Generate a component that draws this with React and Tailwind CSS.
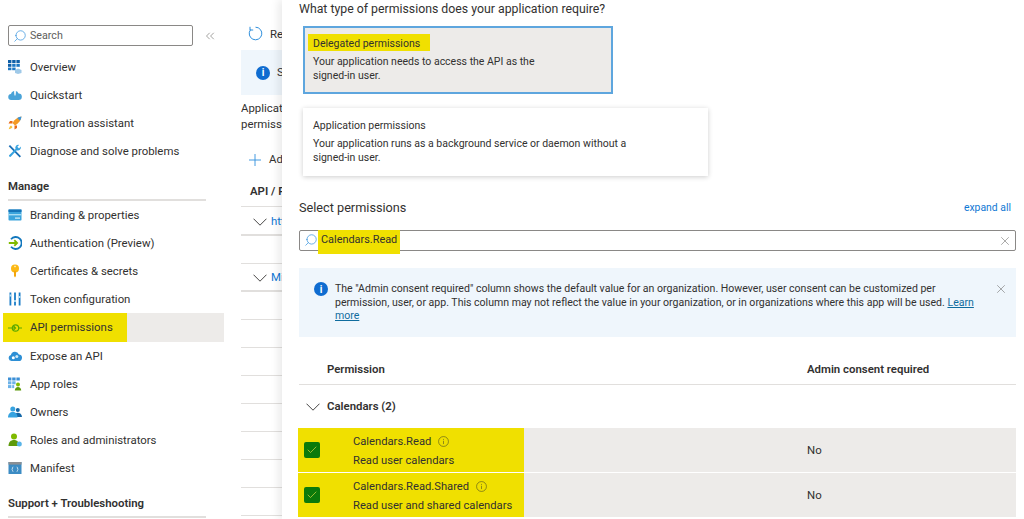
import { Search, ChevronsLeft, X, Check } from 'lucide-react';

const ICONS = {
  overview: (
    <svg viewBox="0 0 14 14" className="w-[14px] h-[14px]">
      <rect x="0" y="0" width="3.4" height="3" fill="#0f5fa8" /><rect x="4.2" y="0" width="3.4" height="3" fill="#0f5fa8" /><rect x="8.4" y="0" width="3.4" height="3" fill="#0f5fa8" />
      <rect x="0" y="3.8" width="3.4" height="3" fill="#0f5fa8" /><rect x="4.2" y="3.8" width="3.4" height="3" fill="#1d77c4" /><rect x="8.4" y="3.8" width="3.4" height="3" fill="#1d77c4" />
      <rect x="0" y="7.6" width="3.4" height="2.6" fill="#1d77c4" /><rect x="4.2" y="7.6" width="3.4" height="2.6" fill="#1d77c4" />
      <path d="M7 10l3-1.6 3.5 1.6v3l-3.500 1-3-1z" fill="#9fc9e8" />
    </svg>
  ),
  quickstart: (
    <svg viewBox="0 0 14 14" className="w-[14px] h-[14px]">
      <path d="M3.500 12a3 3 0 0 1-.5-6 4 4 0 0 1 7.600-.6A3.300 3.300 0 0 1 10.500 12z" fill="#4aa3d8" />
      <path d="M6 3.500l1-2 1 2-.5 4h-1z" fill="#fff" />
    </svg>
  ),
  rocket: (
    <svg viewBox="0 0 14 14" className="w-[14px] h-[14px]">
      <path d="M13.500.5C9.500 1 6.500 3.500 4.500 7l2.500 2.500c3.500-2 6-5 6.500-9z" fill="#f59a23" />
      <path d="M13.500.5c-1.500.2-3 .7-4.300 1.500l2.800 2.800c.8-1.300 1.300-2.800 1.500-4.300z" fill="#3a96dd" />
      <path d="M4.500 5H2L.5 7.500h4zM9 9.500V12l-2.500 1.500v-4z" fill="#e86a17" />
      <path d="M3 9.500c-1.500.8-2 2.500-2.200 3.700 1.300-.2 3-.7 3.700-2.200z" fill="#f8c13a" />
    </svg>
  ),
  tools: (
    <svg viewBox="0 0 14 14" className="w-[14px] h-[14px]">
      <path d="M2 1l11 11.200-1.300 1.300L.7 2.300z" fill="#1a6fb5" />
      <path d="M12.800 2.600a3 3 0 0 1-4 3.600L2.700 12.800a1.200 1.200 0 0 1-1.600-1.600L7.500 4.900a3 3 0 0 1 3.600-4L9.300 2.700l1.700 1.700z" fill="#37a3e0" />
    </svg>
  ),
  branding: (
    <svg viewBox="0 0 14 14" className="w-[14px] h-[14px]">
      <rect x="0.500" y="1.500" width="13" height="11" rx="0.800" fill="#3ba4dc" />
      <rect x="0.500" y="1.500" width="13" height="2.500" fill="#1674b8" />
      <rect x="0.500" y="6" width="13" height="1.400" fill="#a9ddf3" />
      <rect x="7" y="9.500" width="5" height="1.200" fill="#d8f0fa" />
    </svg>
  ),
  auth: (
    <svg viewBox="0 0 14 14" className="w-[14px] h-[14px]" fill="none">
      <path d="M3 3.200A6 6 0 1 1 3 10.800" stroke="#1277bd" strokeWidth="1.800" />
      <path d="M.8 7h8M6.300 4.200L9.100 7l-2.800 2.800" stroke="#7fba00" strokeWidth="1.800" />
    </svg>
  ),
  key: (
    <svg viewBox="0 0 14 14" className="w-[14px] h-[14px]">
      <circle cx="7" cy="4.500" r="4" fill="#fcb814" />
      <path d="M6 7h2v5l-1 1.500L6 12z" fill="#f2a60e" />
      <rect x="6.200" y="1.800" width="1.600" height="1.400" fill="#fff3c4" />
    </svg>
  ),
  token: (
    <svg viewBox="0 0 14 14" className="w-[14px] h-[14px]">
      <rect x="1.500" y="0.500" width="1.800" height="13" fill="#1a7cc7" />
      <rect x="6.100" y="0.500" width="1.800" height="13" fill="#1a7cc7" />
      <rect x="10.700" y="0.500" width="1.800" height="13" fill="#1a7cc7" />
      <rect x="1.500" y="2.500" width="1.800" height="2" fill="#b3e0f7" />
      <rect x="6.100" y="8" width="1.800" height="2" fill="#b3e0f7" />
      <rect x="10.700" y="4" width="1.800" height="2" fill="#b3e0f7" />
    </svg>
  ),
  api: (
    <svg viewBox="0 0 14 14" className="w-[14px] h-[14px]" fill="none" stroke="#5aa700" strokeWidth="1.200">
      <circle cx="7.500" cy="7" r="3.200" />
      <path d="M0 7h6.500M11 7h3M5.500 5l2 2-2 2" />
    </svg>
  ),
  expose: (
    <svg viewBox="0 0 14 14" className="w-[14px] h-[14px]">
      <path d="M3.500 12a3 3 0 0 1-.6-5.900 4.200 4.200 0 0 1 8-.7A3.300 3.300 0 0 1 10.500 12z" fill="#2d8fd5" />
      <circle cx="5.300" cy="8.800" r="1.500" fill="#fff" /><circle cx="8.800" cy="7.500" r="1.500" fill="#cfe9f8" />
    </svg>
  ),
  roles: (
    <svg viewBox="0 0 14 14" className="w-[14px] h-[14px]">
      <rect x="0" y="0.500" width="3.400" height="3" fill="#3b8fd6" /><rect x="4.200" y="0.500" width="3.400" height="3" fill="#3b8fd6" /><rect x="8.400" y="0.500" width="3.400" height="3" fill="#3b8fd6" />
      <rect x="0" y="4.300" width="3.400" height="3" fill="#6cb2e8" /><rect x="4.200" y="4.300" width="3.400" height="3" fill="#6cb2e8" />
      <rect x="0" y="8.100" width="3.400" height="3" fill="#6cb2e8" /><rect x="4.200" y="8.100" width="2" height="3" fill="#6cb2e8" />
      <circle cx="10" cy="7.500" r="2" fill="#7fba00" />
      <path d="M6.800 13.500c0-2.300 1.400-3.500 3.200-3.500s3.200 1.200 3.200 3.500z" fill="#5e9a0c" />
    </svg>
  ),
  owners: (
    <svg viewBox="0 0 14 14" className="w-[14px] h-[14px]">
      <circle cx="9.800" cy="5" r="2" fill="#1467a8" />
      <path d="M6.500 12c0-2.800 1.400-4.300 3.300-4.300S14 9.200 14 12z" fill="#1467a8" />
      <circle cx="4.800" cy="4" r="2.500" fill="#37a3e0" />
      <path d="M0 12.500c0-3.500 2-5.500 4.800-5.500s4.700 2 4.700 5.500z" fill="#37a3e0" />
    </svg>
  ),
  admins: (
    <svg viewBox="0 0 14 14" className="w-[14px] h-[14px]">
      <circle cx="6" cy="3.500" r="3" fill="#7fba00" />
      <path d="M.5 13c0-4 2.300-6 5.500-6s5 2 5 6z" fill="#5e9a0c" />
      <circle cx="11.300" cy="11" r="2.500" fill="#59b4e8" />
    </svg>
  ),
  manifest: (
    <svg viewBox="0 0 14 14" className="w-[14px] h-[14px]">
      <rect x="0.500" y="1" width="13" height="12" fill="#3c8cc4" />
      <rect x="0.500" y="1" width="13" height="2.600" fill="#8a8f94" />
      <path d="M5.300 6c-.8 0-.8.500-.8 1.200s-.4 1-.7 1.100c.3.100.7.400.7 1.100s0 1.100.8 1.100M8.700 6c.8 0 .8.500.8 1.200s.4 1 .7 1.100c-.3.100-.7.400-.7 1.100s0 1.100-.8 1.100" fill="none" stroke="#fff" strokeWidth="0.700" />
    </svg>
  ),
};

const TOP_ITEMS = [
  ['overview', 'Overview'],
  ['quickstart', 'Quickstart'],
  ['rocket', 'Integration assistant'],
  ['tools', 'Diagnose and solve problems'],
];

const MANAGE_BEFORE = [
  ['branding', 'Branding & properties'],
  ['auth', 'Authentication (Preview)'],
  ['key', 'Certificates & secrets'],
  ['token', 'Token configuration'],
];

const MANAGE_AFTER = [
  ['expose', 'Expose an API'],
  ['roles', 'App roles'],
  ['owners', 'Owners'],
  ['admins', 'Roles and administrators'],
  ['manifest', 'Manifest'],
];

function Chevron() {
  return (
    <svg viewBox="0 0 14 8" className="w-[14px] h-[8px] shrink-0" fill="none" stroke="#323130" strokeWidth="0.900">
      <path d="M.5.7L7 7.200 13.500.7" />
    </svg>
  );
}

function SearchIcon() {
  return <Search size={14} strokeWidth={1.2} className="text-[#2f8fdc] -scale-x-100 shrink-0" />;
}

function InfoDot() {
  return (
    <div className="w-[14px] h-[14px] rounded-full bg-[#0f6cd0] text-white flex items-center justify-center shrink-0 text-[10px] font-bold">i</div>
  );
}

function InfoOutline() {
  return (
    <svg viewBox="0 0 12 12" className="w-[11px] h-[11px] shrink-0" fill="none" stroke="#5b5a20" strokeWidth="0.700">
      <circle cx="6" cy="6" r="5.400" />
      <path d="M6 5.200v3.600M6 3.200v1" />
    </svg>
  );
}

function NavRow({ icon, label }) {
  return (
    <div className="h-[28px] pl-[8px] flex items-center gap-[8px] whitespace-nowrap">
      {ICONS[icon]}
      <span className="pt-[1px]">{label}</span>
    </div>
  );
}

function NavHeading({ children, className }) {
  return (
    <div className={`ml-[8px] w-[198px] h-[24px] border-b-2 border-[#e1dfdd] font-semibold leading-[18px] ${className}`}>
      {children}
    </div>
  );
}

function PermissionCard({ title, highlight, selected, lines }) {
  const box = selected
    ? 'w-[310px] bg-[#edebe9] border-2 border-[#5ea6de]'
    : 'w-[405px] bg-white border-2 border-white shadow-[0_1px_5px_rgba(0,0,0,0.2)]';
  return (
    <div className={`ml-[4px] h-[68px] pl-[8px] pt-[6px] text-[10.5px] leading-[14px] whitespace-nowrap ${box}`}>
      <div className={`h-[17px] -ml-[5px] pl-[5px] mb-[4px] leading-[19px] ${highlight ? 'w-[122px] bg-[#f0e000]' : ''}`}>
        {title}
      </div>
      {lines.map((line) => (
        <div key={line}>{line}</div>
      ))}
    </div>
  );
}

function ResultRow({ name, desc, hasGap }) {
  return (
    <div className={`-ml-[1px] h-[44px] bg-[#edebe9] flex items-center ${hasGap ? 'mb-[1px]' : ''}`}>
      <div className="w-[226px] h-full bg-[#f0e000] pl-[6px] flex items-center shrink-0">
        <div className="w-[16px] h-[16px] rounded-[2px] bg-[#0b7a0b] flex items-center justify-center shrink-0">
          <Check size={12} strokeWidth={1.3} className="text-[#e6e04a]" />
        </div>
        <div className="ml-[33px] pt-[2px] text-[11.2px] leading-[19px]">
          <div className="flex items-center gap-[7px] whitespace-nowrap">
            {name}
            <InfoOutline />
          </div>
          <div className="whitespace-nowrap">{desc}</div>
        </div>
      </div>
      <div className="ml-[283px] pt-[2px]">No</div>
    </div>
  );
}

export default function App() {
  return (
    <div className="w-[1024px] h-[519px] overflow-hidden flex bg-white text-[#323130] text-[11.4px] font-['Roboto',sans-serif]">
      <aside className="w-[224px] shrink-0 pt-[25px]">
        <div className="flex items-center">
          <div className="ml-[8px] w-[185px] h-[21px] border border-[#8a8886] rounded-[2px] flex items-center pl-[4px] gap-[3px] text-[10.7px] text-[#605e5c]">
            <SearchIcon />
            <span className="pt-[1px]">Search</span>
          </div>
          <ChevronsLeft size={14} strokeWidth={1} className="ml-[10px] text-[#605e5c]" />
        </div>
        <div className="mt-[7px]">
          {TOP_ITEMS.map(([icon, label]) => (
            <NavRow key={label} icon={icon} label={label} />
          ))}
        </div>
        <NavHeading className="mt-[12px]">Manage</NavHeading>
        {MANAGE_BEFORE.map(([icon, label]) => (
          <NavRow key={label} icon={icon} label={label} />
        ))}
        <div className="ml-[3px] h-[29px] bg-[#edebe9]">
          <div className="w-[124px] h-[29px] bg-[#f0e000] pl-[5px] flex items-center gap-[8px] whitespace-nowrap">
            {ICONS.api}
            <span className="pt-[1px]">API permissions</span>
          </div>
        </div>
        {MANAGE_AFTER.map(([icon, label]) => (
          <NavRow key={label} icon={icon} label={label} />
        ))}
        <NavHeading className="mt-[12px]">Support + Troubleshooting</NavHeading>
      </aside>

      <main className="ml-[17px] w-[41px] shrink-0 overflow-hidden whitespace-nowrap">
        <div className="h-[50px] pt-[26px] pl-[7px] flex items-start gap-[7px]">
          <svg viewBox="0 0 15 15" className="w-[15px] h-[15px] shrink-0" fill="none" stroke="#2f8fdc" strokeWidth="1">
            <path d="M7.500 1.200A6.300 6.300 0 1 1 2.500 3.700" />
            <path d="M2 .8v3.200h3.200" />
          </svg>
          <span className="leading-[16px]">Refresh</span>
        </div>
        <div className="h-[45px] bg-[#eff6fc] pl-[15px] flex items-center gap-[7px]">
          <InfoDot />
          <span>Some</span>
        </div>
        <div className="mt-[5px] leading-[16px]">
          <div>Applications</div>
          <div>permissions</div>
        </div>
        <div className="mt-[16px] h-[24px] pl-[8px] flex items-center gap-[8px]">
          <svg viewBox="0 0 12 12" className="w-[12px] h-[12px] shrink-0" fill="none" stroke="#2f8fdc" strokeWidth="0.900">
            <path d="M6 0v12M0 6h12" />
          </svg>
          <span>Add a permission</span>
        </div>
        <div className="mt-[10px] h-[25px] pl-[9px] border-b border-[#e1dfdd] font-semibold leading-[18px]">API / Permissions</div>
        <div className="h-[29px] pl-[12px] pt-[2px] border-b-2 border-[#e1dfdd] flex items-center gap-[4px]">
          <Chevron />
          <span className="text-[#0f78d4]">https://</span>
        </div>
        <div className="h-[28px] border-b border-[#e1dfdd]" />
        <div className="h-[28px] pl-[12px] pt-[2px] border-b-2 border-[#e1dfdd] flex items-center gap-[4px]">
          <Chevron />
          <span className="text-[#0f78d4]">Microsoft</span>
        </div>
        {[0, 1, 2, 3, 4, 5, 6, 7, 8].map((n) => (
          <div key={n} className="h-[28px] border-b border-[#e1dfdd]" />
        ))}
      </main>

      <section className="relative flex-1 min-w-0 bg-white pl-[17px] pr-[8px] shadow-[-4px_0_8px_rgba(0,0,0,0.08)]">
        <h2 className="h-[26px] text-[12.3px] leading-[18px]">What type of permissions does your application require?</h2>
        <PermissionCard
          selected
          highlight
          title="Delegated permissions"
          lines={['Your application needs to access the API as the', 'signed-in user.']}
        />
        <div className="h-[14px]" />
        <PermissionCard
          title="Application permissions"
          lines={['Your application runs as a background service or daemon without a', 'signed-in user.']}
        />
        <div className="mt-[22px] h-[20px] flex items-center justify-between">
          <span className="text-[12.7px]">Select permissions</span>
          <span className="text-[10.4px] text-[#0f78d4] mr-[5px]">expand all</span>
        </div>
        <div className="mt-[12px] h-[21px] border border-[#8a8886] rounded-[2px] flex items-start pl-[4px] pr-[3px]">
          <div className="mt-[2px]"><SearchIcon /></div>
          <span className="-mt-[1px] h-[24px] px-[3px] bg-[#f0e000] flex items-center pb-[3px] text-[10.9px]">Calendars.Read</span>
          <X size={14} strokeWidth={0.9} className="ml-auto mt-[3px] text-[#605e5c]" />
        </div>
        <div className="mt-[17px] h-[69px] bg-[#eff6fc] pl-[15px] pr-[8px] pt-[14px] flex items-start">
          <InfoDot />
          <p className="ml-[7px] text-[10.55px] leading-[13.5px] whitespace-nowrap">
            The "Admin consent required" column shows the default value for an organization. However, user consent can be customized per
            <br />
            permission, user, or app. This column may not reflect the value in your organization, or in organizations where this app will be used. <span className="text-[#0f6c9e] underline">Learn</span>
            <br />
            <span className="text-[#0f6c9e] underline">more</span>
          </p>
          <X size={14} strokeWidth={0.9} className="ml-auto shrink-0 text-[#605e5c]" />
        </div>
        <div className="mt-[19px] h-[29px] border-b border-[#e1dfdd] flex font-semibold pl-[28px]">
          <span className="w-[480px] leading-[26px]">Permission</span>
          <span className="leading-[26px]">Admin consent required</span>
        </div>
        <div className="h-[43px] flex items-center pl-[7px] gap-[7px] font-semibold">
          <Chevron />
          Calendars (2)
        </div>
        <ResultRow name="Calendars.Read" desc="Read user calendars" hasGap />
        <ResultRow name="Calendars.Read.Shared" desc="Read user and shared calendars" />
      </section>
    </div>
  );
}
